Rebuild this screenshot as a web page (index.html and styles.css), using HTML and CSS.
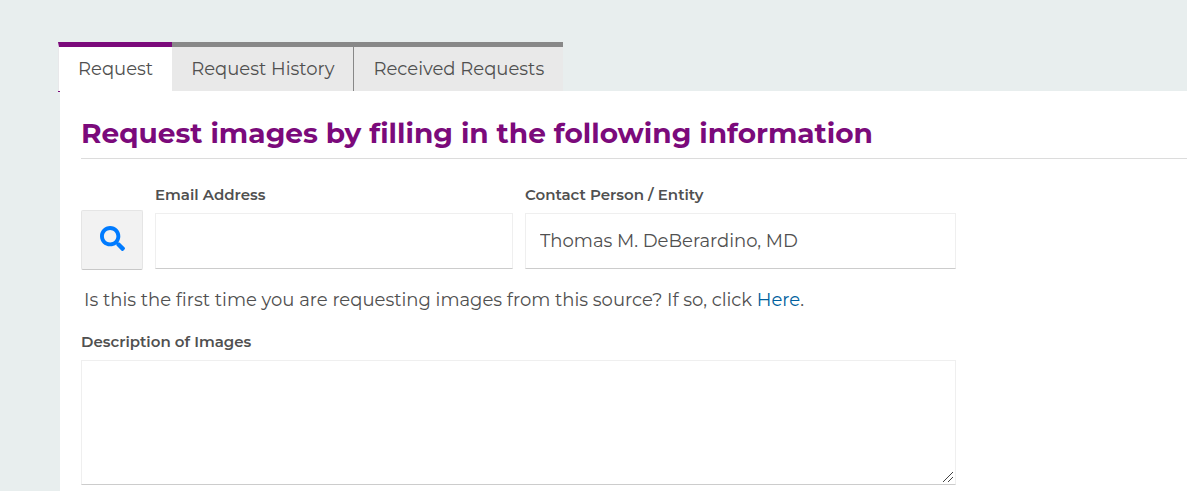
FILE: index.html
```html
<!DOCTYPE html>
<html lang="en">
<head>
<meta charset="utf-8">
<meta name="viewport" content="width=device-width, initial-scale=1">
<title>Request Images</title>
<link rel="stylesheet" href="styles.css">
</head>
<body>
<main class="page">
  <div class="tabs" role="tablist">
    <button class="tab tab-active" type="button" role="tab" aria-selected="true">Request</button>
    <button class="tab" type="button" role="tab" aria-selected="false">Request History</button>
    <button class="tab" type="button" role="tab" aria-selected="false">Received Requests</button>
  </div>
  <section class="panel">
    <h1 class="title">Request images by filling in the following information</h1>
    <form class="form">
      <div class="row">
        <button class="search" type="button" aria-label="Search">
          <svg class="search-icon" viewBox="0 0 512 512" aria-hidden="true"><path fill="currentColor" d="M505 442.700 405.300 343c-4.500-4.500-10.600-7-17-7H372c27.600-35.300 44-79.700 44-128C416 93.100 322.900 0 208 0S0 93.100 0 208s93.100 208 208 208c48.300 0 92.700-16.400 128-44v16.300c0 6.400 2.500 12.500 7 17l99.700 99.700c9.400 9.400 24.600 9.400 33.900 0l28.300-28.300c9.400-9.400 9.400-24.600.1-34zM208 336c-70.700 0-128-57.200-128-128 0-70.700 57.200-128 128-128 70.700 0 128 57.200 128 128 0 70.700-57.200 128-128 128z"/></svg>
        </button>
        <div class="field field-email">
          <label class="label" for="email">Email Address</label>
          <input class="input" id="email" type="email">
        </div>
        <div class="field field-contact">
          <label class="label" for="contact">Contact Person / Entity</label>
          <input class="input" id="contact" type="text" value="Thomas M. DeBerardino, MD">
        </div>
      </div>
      <p class="hint">Is this the first time you are requesting images from this source? If so, click <a class="link" href="#">Here</a>.</p>
      <div class="field field-description">
        <label class="label" for="description">Description of Images</label>
        <textarea class="input textarea" id="description"></textarea>
        <svg class="grip" viewBox="0 0 10 10" aria-hidden="true"><path d="M0 10 10 0M5 10l5-5" fill="none" stroke="#444" stroke-width="1"/></svg>
      </div>
    </form>
  </section>
</main>
</body>
</html>
```
FILE: styles.css
```css
* {
  box-sizing: border-box;
}

body {
  margin: 0;
  background: #e8eeee;
  color: #505050;
  font-family: Gotham, Montserrat, Inter, sans-serif;
  font-size: 18px;
  line-height: 24px;
}

button,
input,
textarea {
  font: inherit;
  color: inherit;
}

.page {
  display: flex;
  flex-direction: column;
  min-height: 100vh;
  padding: 42px 0 0 58px;
}

.tabs {
  display: flex;
}

.tab {
  padding: 10px 19px;
  border: 0;
  border-top: 5px solid #888;
  background: #e9e9e9;
  line-height: 24px;
}

.tab + .tab + .tab {
  border-left: 1px solid #888;
}

.tab-active {
  border-top-color: #7b0a7b;
  border-left: 1px solid #e8e8ea;
  background: #fff;
}

.panel {
  position: relative;
  flex: 1;
  margin-left: 2px;
  padding: 24px 0 6px 21px;
  background: #fff;
}

/* End of the active tab's edge, beside the panel corner */
.panel::before {
  content: "";
  position: absolute;
  top: 0;
  right: 100%;
  width: 2px;
  height: 1px;
  background: #7b0a7b;
}

.title {
  margin: 0;
  padding-bottom: 7px;
  border-bottom: 1px solid #dcdcdc;
  color: #7b0a7b;
  font-size: 28px;
  font-weight: 700;
  line-height: 36px;
}

.form {
  max-width: 875px;
  padding-top: 26px;
}

.row {
  display: flex;
  align-items: flex-end;
  gap: 12px;
}

.search {
  display: flex;
  align-items: center;
  justify-content: center;
  width: 62px;
  height: 60px;
  padding: 0 0 4px;
  border: 1px solid #e5e5e5;
  border-bottom-color: #c8c8c8;
  border-radius: 2px;
  background: #f2f2f2;
  color: #007bff;
}

.search-icon {
  width: 25px;
  height: 25px;
}

.field {
  display: flex;
  flex-direction: column;
  gap: 8px;
}

.field-email,
.field-contact {
  padding-bottom: 1px;
}

.field-email {
  flex: 358;
}

.field-contact {
  flex: 431;
}

.field-description {
  position: relative;
}

.label {
  font-size: 15px;
  font-weight: 600;
  line-height: 20px;
}

.input {
  width: 100%;
  height: 56px;
  padding: 0 14px;
  border: 1px solid #efefef;
  border-bottom-color: #ccc;
  border-radius: 0;
  background: #fff;
}

.textarea {
  height: 125px;
  padding: 12px 14px;
  resize: vertical;
}

.textarea::-webkit-resizer {
  background: transparent;
}

.grip {
  position: absolute;
  right: 3px;
  bottom: 3px;
  width: 10px;
  height: 10px;
  pointer-events: none;
}

.hint {
  margin: 0;
  padding: 18px 0 20px 3px;
}

.link {
  color: #005f9e;
  text-decoration: none;
}
```
